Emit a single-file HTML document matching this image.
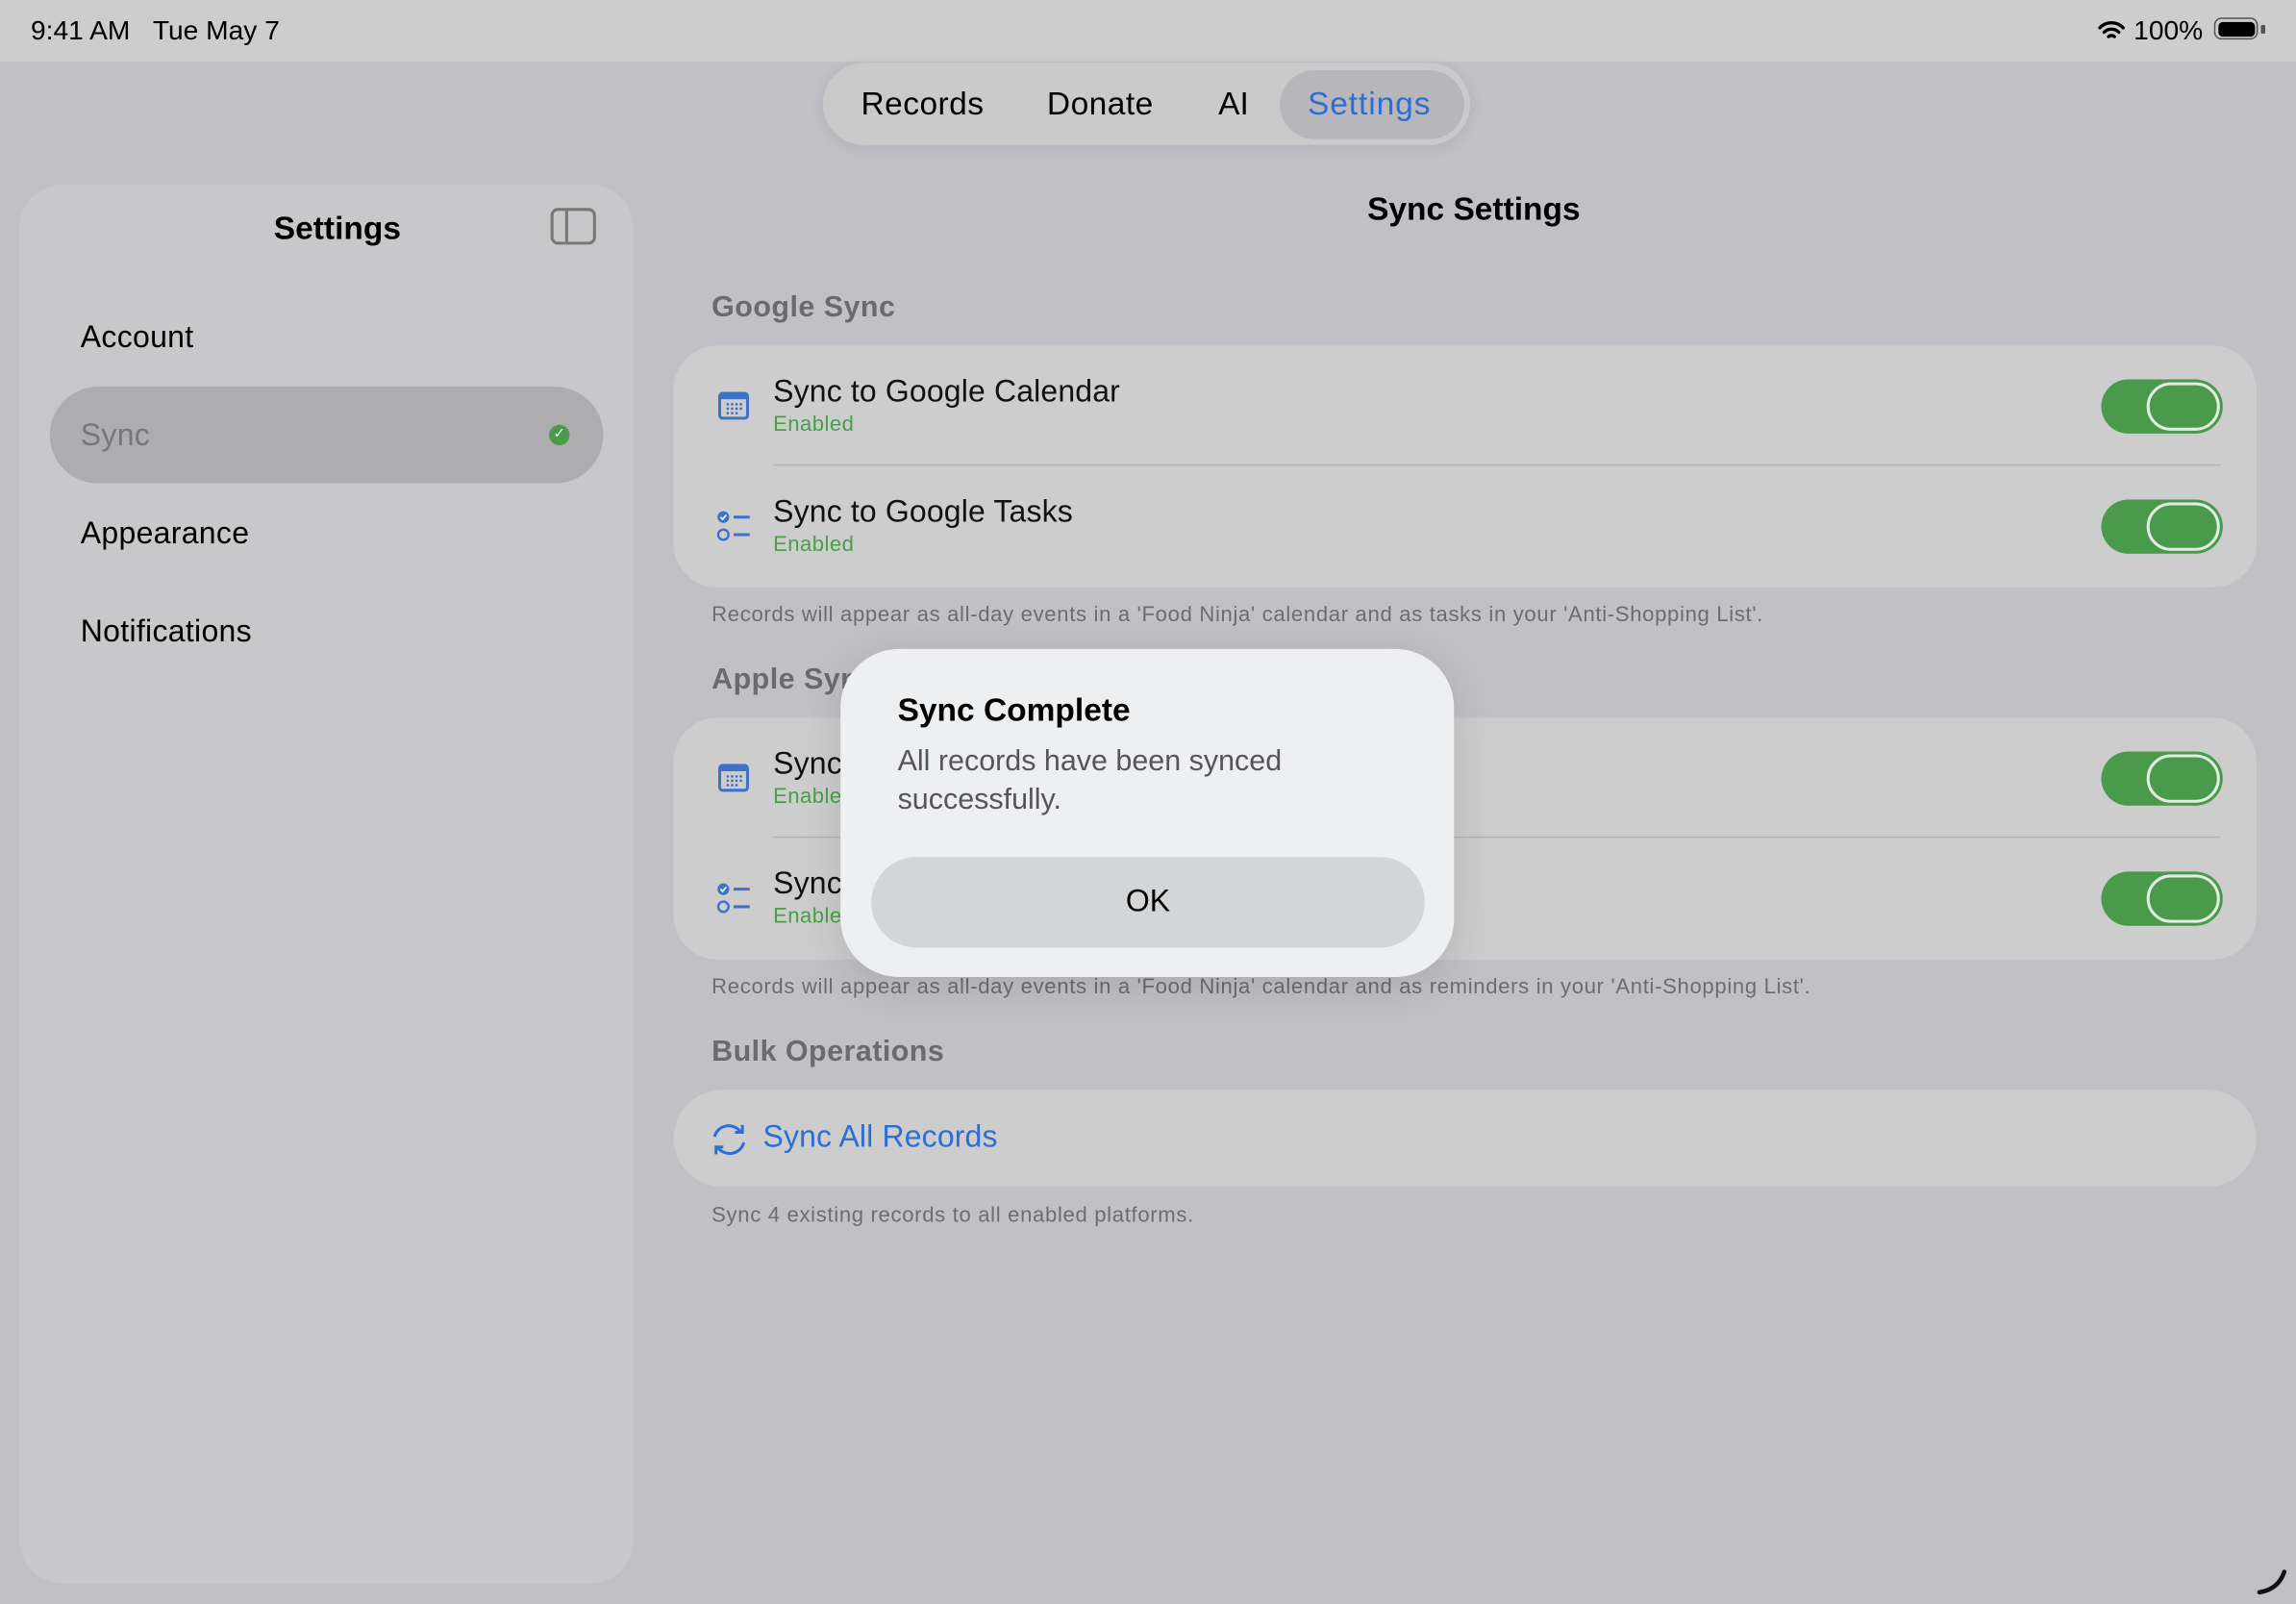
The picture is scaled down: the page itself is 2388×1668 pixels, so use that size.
<!DOCTYPE html>
<html><head><meta charset="utf-8"><style>
html,body{margin:0;padding:0;width:2388px;height:1668px;overflow:hidden;background:#c1c0c5}
#w{position:absolute;left:0;top:0;width:1568px;height:1095px;transform:scale(1.522959,1.523288);transform-origin:0 0;font-family:"Liberation Sans",sans-serif;color:#000;background:#c1c0c5}
.a{position:absolute}
.card{position:absolute;left:460px;width:1081px;background:#cdcdce;border-radius:30px}
.t{font-size:21px;color:#111;letter-spacing:.1px}
.en{font-size:14.5px;color:#48a048;letter-spacing:.3px}
.tog{position:absolute;width:83px;height:37px;border-radius:19px;background:#4a9a4c}
.tog:after{content:"";position:absolute;right:2px;top:2px;width:50px;height:33px;border-radius:17px;border:2px solid #e3ece3;box-sizing:border-box;background:#4a9a4c}
.hd{font-size:20px;color:#6a6a70;font-weight:bold;letter-spacing:.3px}
.ft{font-size:14.5px;color:#6c6c72;letter-spacing:.44px}
.sb{font-size:21px;letter-spacing:.2px}
</style></head><body><div id="w">
<div class="a" style="left:0;top:0;width:1568px;height:42px;background:#cdcdcd"></div>
<div class="a" style="left:21px;top:10px;font-size:18.5px">9:41 AM&nbsp;&nbsp;&nbsp;Tue May 7</div>
<div class="a" style="left:1432px;top:10px;font-size:18.5px">
<svg width="20" height="16" viewBox="0 0 20 16" style="vertical-align:-2px"><path d="M2 6a11 11 0 0 1 16 0M5 9a7 7 0 0 1 10 0M8 12a3 3 0 0 1 4 0" stroke="#000" stroke-width="2.2" fill="none" stroke-linecap="round"/></svg> 100%</div>
<div class="a" style="left:1512px;top:12px;width:30px;height:15px;border:1.5px solid #555;border-radius:5px;box-sizing:border-box;padding:1.5px"><div style="width:100%;height:100%;background:#000;border-radius:3px"></div></div>
<div class="a" style="left:1544px;top:17px;width:3px;height:6px;background:#555;border-radius:1px"></div>

<div class="a" style="left:562px;top:43px;width:442px;height:56px;border-radius:28px;background:#cacacb;box-shadow:0 2px 10px rgba(0,0,0,.08)"></div>
<div class="a" style="left:874px;top:48px;width:126px;height:47px;border-radius:24px;background:#b7b7bb"></div>
<div class="a" style="left:588px;top:58px;font-size:22px;letter-spacing:.3px">Records</div>
<div class="a" style="left:715px;top:58px;font-size:22px;letter-spacing:.3px">Donate</div>
<div class="a" style="left:832px;top:58px;font-size:22px">AI</div>
<div class="a" style="left:893px;top:58px;font-size:22px;color:#2c6ed6;letter-spacing:.6px">Settings</div>

<div class="a" style="left:13px;top:126px;width:420px;height:955px;border-radius:30px;background:#c8c8ca"></div>
<div class="a" style="left:187px;top:143px;font-size:22px;font-weight:bold">Settings</div>
<div class="a" style="left:376px;top:142px;width:31px;height:25px;border:2px solid #777;border-radius:5px;box-sizing:border-box"><div style="position:absolute;left:8px;top:0;bottom:0;border-left:2px solid #777"></div></div>
<div class="a sb" style="left:55px;top:219px">Account</div>
<div class="a" style="left:34px;top:264px;width:378px;height:66px;border-radius:33px;background:#adadaf"></div>
<div class="a sb" style="left:55px;top:286px;color:#77777b">Sync</div>
<div class="a" style="left:375px;top:290px;width:14px;height:14px;border-radius:7px;background:#4a9a4c;color:#dfe;font-size:10px;text-align:center;line-height:14px">✓</div>
<div class="a sb" style="left:55px;top:353px">Appearance</div>
<div class="a sb" style="left:55px;top:420px">Notifications</div>

<div class="a" style="left:0;width:2013px;text-align:center;top:130px;font-size:22px;font-weight:bold">Sync Settings</div>

<div class="a hd" style="left:486px;top:199px">Google Sync</div>
<div class="card" style="top:236px;height:165px"></div>
<svg class="a" style="left:490px;top:266px" width="22" height="22" viewBox="0 0 22 22"><rect x="1.5" y="2.5" width="19" height="17" rx="2" fill="none" stroke="#3d72c8" stroke-width="2"/><rect x="1.5" y="2.5" width="19" height="4" fill="#3d72c8"/><g fill="#3d72c8"><circle cx="7" cy="10" r=".9"/><circle cx="10" cy="10" r=".9"/><circle cx="13" cy="10" r=".9"/><circle cx="16" cy="10" r=".9"/><circle cx="7" cy="13" r=".9"/><circle cx="10" cy="13" r=".9"/><circle cx="13" cy="13" r=".9"/><circle cx="16" cy="13" r=".9"/><circle cx="7" cy="16" r=".9"/><circle cx="10" cy="16" r=".9"/><circle cx="13" cy="16" r=".9"/></g></svg>
<div class="a t" style="left:528px;top:256px">Sync to Google Calendar</div>
<div class="a en" style="left:528px;top:282px">Enabled</div>
<div class="tog" style="left:1435px;top:259px"></div>
<div class="a" style="left:528px;top:317px;width:988px;height:1px;background:#b3b3b5"></div>
<svg class="a" style="left:488px;top:347px" width="26" height="24" viewBox="0 0 26 24"><circle cx="6" cy="6" r="4" fill="#3d72c8"/><path d="M4 6l1.5 1.5L8 4.5" stroke="#cfd" stroke-width="1.2" fill="none"/><circle cx="6" cy="18" r="3.5" fill="none" stroke="#3d72c8" stroke-width="1.6"/><path d="M13 6h11M13 18h11" stroke="#3d72c8" stroke-width="2"/></svg>
<div class="a t" style="left:528px;top:338px">Sync to Google Tasks</div>
<div class="a en" style="left:528px;top:364px">Enabled</div>
<div class="tog" style="left:1435px;top:341px"></div>
<div class="a ft" style="left:486px;top:412px">Records will appear as all-day events in a 'Food Ninja' calendar and as tasks in your 'Anti-Shopping List'.</div>

<div class="a hd" style="left:486px;top:453px">Apple Sync</div>
<div class="card" style="top:490px;height:165px"></div>
<svg class="a" style="left:490px;top:520px" width="22" height="22" viewBox="0 0 22 22"><rect x="1.5" y="2.5" width="19" height="17" rx="2" fill="none" stroke="#3d72c8" stroke-width="2"/><rect x="1.5" y="2.5" width="19" height="4" fill="#3d72c8"/><g fill="#3d72c8"><circle cx="7" cy="10" r=".9"/><circle cx="10" cy="10" r=".9"/><circle cx="13" cy="10" r=".9"/><circle cx="16" cy="10" r=".9"/><circle cx="7" cy="13" r=".9"/><circle cx="10" cy="13" r=".9"/><circle cx="13" cy="13" r=".9"/><circle cx="16" cy="13" r=".9"/><circle cx="7" cy="16" r=".9"/><circle cx="10" cy="16" r=".9"/><circle cx="13" cy="16" r=".9"/></g></svg>
<div class="a t" style="left:528px;top:510px">Sync to Apple Calendar</div>
<div class="a en" style="left:528px;top:536px">Enabled</div>
<div class="tog" style="left:1435px;top:513px"></div>
<div class="a" style="left:528px;top:571px;width:988px;height:1px;background:#b3b3b5"></div>
<svg class="a" style="left:488px;top:601px" width="26" height="24" viewBox="0 0 26 24"><circle cx="6" cy="6" r="4" fill="#3d72c8"/><path d="M4 6l1.5 1.5L8 4.5" stroke="#cfd" stroke-width="1.2" fill="none"/><circle cx="6" cy="18" r="3.5" fill="none" stroke="#3d72c8" stroke-width="1.6"/><path d="M13 6h11M13 18h11" stroke="#3d72c8" stroke-width="2"/></svg>
<div class="a t" style="left:528px;top:592px">Sync to Apple Reminders</div>
<div class="a en" style="left:528px;top:618px">Enabled</div>
<div class="tog" style="left:1435px;top:595px"></div>
<div class="a ft" style="left:486px;top:666px">Records will appear as all-day events in a 'Food Ninja' calendar and as reminders in your 'Anti-Shopping List'.</div>

<div class="a hd" style="left:486px;top:707px">Bulk Operations</div>
<div class="card" style="top:744px;height:66px;border-radius:33px"></div>
<svg class="a" style="left:485px;top:765px" width="26" height="26" viewBox="0 0 26 26"><path d="M3 11A10 10 0 0 1 21 8M23 15A10 10 0 0 1 5 18" stroke="#2c6ed6" stroke-width="2" fill="none"/><path d="M17 8h5V3" stroke="#2c6ed6" stroke-width="2" fill="none"/><path d="M9 18H4v5" stroke="#2c6ed6" stroke-width="2" fill="none"/></svg>
<div class="a" style="left:521px;top:765px;font-size:21px;color:#2c6ed6;letter-spacing:.1px">Sync All Records</div>
<div class="a ft" style="left:486px;top:822px">Sync 4 existing records to all enabled platforms.</div>

<div class="a" style="left:574px;top:443px;width:419px;height:224px;border-radius:40px;background:#eeeff0;box-shadow:0 6px 30px rgba(0,0,0,.12)"></div>
<div class="a" style="left:613px;top:472px;font-size:22px;font-weight:bold">Sync Complete</div>
<div class="a" style="left:613px;top:507px;font-size:20px;color:#55555a;line-height:26px;width:340px">All records have been synced successfully.</div>
<div class="a" style="left:595px;top:585px;width:378px;height:62px;border-radius:31px;background:#d4d5d6;text-align:center;line-height:62px;font-size:21px">OK</div>
<svg class="a" style="left:1540px;top:1067px" width="24" height="24" viewBox="0 0 24 24"><path d="M3 20Q16 18 20 6" stroke="#111" stroke-width="3" fill="none" stroke-linecap="round"/></svg>
</div></body></html>
